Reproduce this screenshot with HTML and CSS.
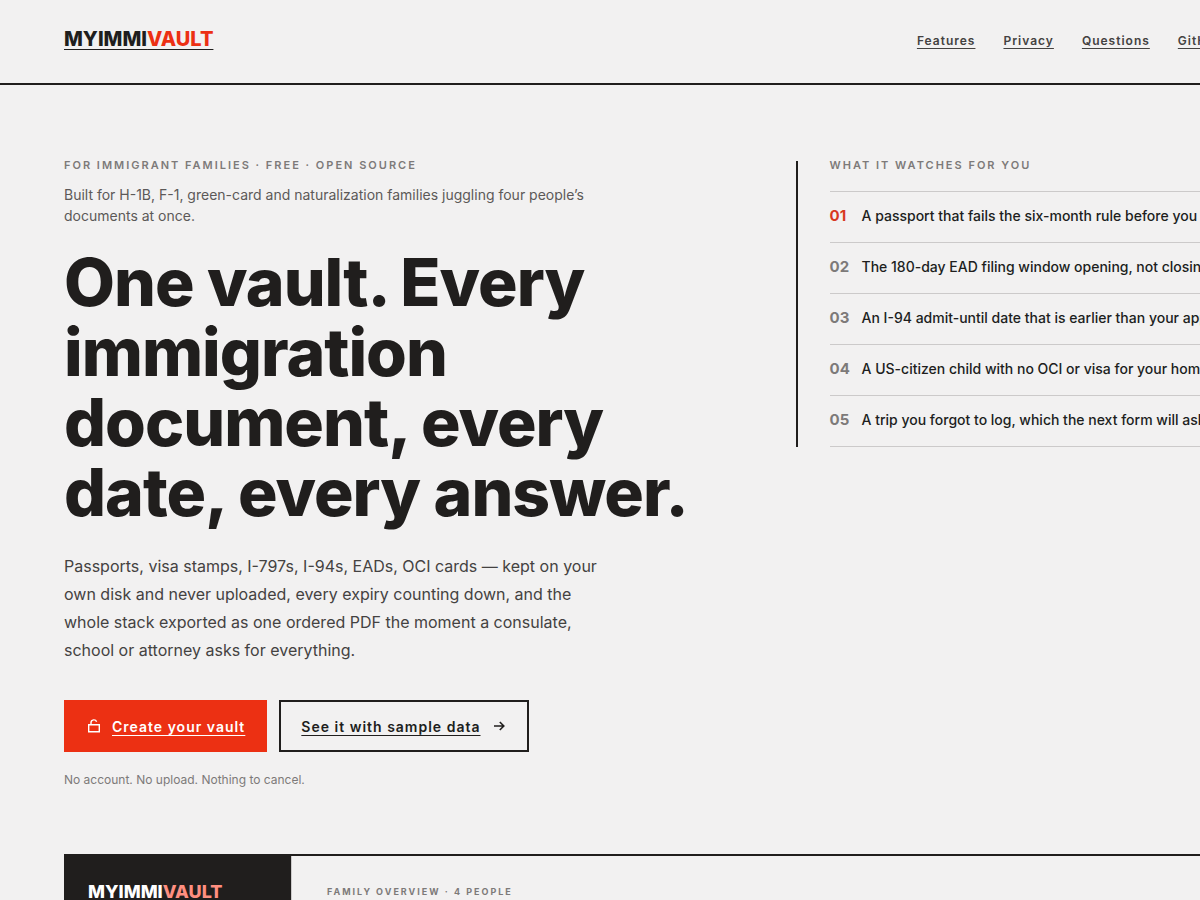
FILE: index.html
```
<!DOCTYPE html>
<html lang="en">
<head>
  <meta charset="UTF-8">
  <meta name="viewport" content="width=device-width, initial-scale=1">
  <title>MyImmiVault</title>
  <link rel="stylesheet" href="styles.css">
</head>
<body>
  <div class="page">
    <header class="site-header">
      <a class="logo" href="#">MYIMMI<span>VAULT</span></a>
      <nav class="nav">
        <a href="#features">Features</a>
        <a href="#privacy">Privacy</a>
        <a href="#questions">Questions</a>
        <a href="#github">GitHub</a>
        <a class="nav-open" href="#vault">Open vault</a>
      </nav>
    </header>

    <main>
      <section class="hero">
        <div class="hero-copy">
          <p class="eyebrow">For immigrant families · Free · Open source</p>
          <p class="built-for">Built for H-1B, F-1, green-card and naturalization families juggling four people’s documents at once.</p>
          <h1>One vault. Every immigration document, every date, every answer.</h1>
          <p class="lead">Passports, visa stamps, I-797s, I-94s, EADs, OCI cards — kept on your own disk and never uploaded, every expiry counting down, and the whole stack exported as one ordered PDF the moment a consulate, school or attorney asks for everything.</p>
          <div class="actions">
            <a class="btn btn-primary" href="#vault">
              <svg width="16" height="16" viewBox="0 0 16 16" fill="none" stroke="currentColor" stroke-width="1.4" aria-hidden="true">
                <path d="M2.7 6.7h10.6v7H2.7zM5 6.7V4.6a2.9 2.9 0 0 1 5.6-.9"/>
              </svg>
              <span>Create your vault</span>
            </a>
            <a class="btn btn-outline" href="#sample">
              <span>See it with sample data</span>
              <svg width="16" height="16" viewBox="0 0 16 16" fill="none" stroke="currentColor" stroke-width="1.6" aria-hidden="true">
                <path d="M3 8h9.6M8.8 4l4 4-4 4"/>
              </svg>
            </a>
          </div>
          <p class="note">No account. No upload. Nothing to cancel.</p>
        </div>

        <aside class="watch">
          <h2 class="eyebrow">What it watches for you</h2>
          <ol class="watch-list">
            <li><b class="urgent">01</b><span>A passport that fails the six-month rule before you travel</span></li>
            <li><b>02</b><span>The 180-day EAD filing window opening, not closing</span></li>
            <li><b>03</b><span>An I-94 admit-until date that is earlier than your approval</span></li>
            <li><b>04</b><span>A US-citizen child with no OCI or visa for your home trip</span></li>
            <li><b>05</b><span>A trip you forgot to log, which the next form will ask for</span></li>
          </ol>
        </aside>
      </section>

      <section class="preview">
        <div class="preview-side">
          <span class="preview-logo">MYIMMI<span>VAULT</span></span>
        </div>
        <div class="preview-main">
          <p class="preview-label">Family overview · 4 people</p>
        </div>
      </section>
    </main>
  </div>
</body>
</html>
```
FILE: styles.css
```
:root {
  --bg: #f2f1f1;
  --ink: #201e1d;
  --text: #444241;
  --muted: #7d7a79;
  --line: #cccaca;
  --red: #ec3013;
}

* {
  box-sizing: border-box;
}

body {
  margin: 0;
  background: var(--bg);
  color: var(--ink);
  font-family: Inter, "Liberation Sans", Arial, sans-serif;
}

h1, h2, p, ol {
  margin: 0;
}

a {
  color: inherit;
}

/* desktop layout, scrolls sideways below this width */
.page {
  min-width: 1440px;
}

.site-header {
  display: flex;
  justify-content: space-between;
  align-items: center;
  padding: 20px 64px;
  border-bottom: 2px solid var(--ink);
}

.logo {
  padding-bottom: 6px;
  font-size: 20px;
  font-weight: 800;
  line-height: 24px;
  text-decoration: underline;
  text-decoration-thickness: 1px;
  text-underline-offset: 3px;
}

.logo span {
  color: var(--red);
}

.nav {
  display: flex;
  align-items: center;
  gap: 28px;
  padding-bottom: 2px;
  font-size: 12px;
  font-weight: 600;
  letter-spacing: 1px;
  color: var(--text);
}

.nav a {
  text-decoration-thickness: 1px;
  text-underline-offset: 3px;
}

.nav .nav-open {
  min-width: 124px;
  line-height: 41px;
  text-align: center;
  background: var(--ink);
  color: #fff;
}

.hero {
  display: grid;
  grid-template-columns: 1.15fr 1fr;
  align-items: start;
  gap: 64px;
  padding: 76px 64px 66px;
}

.eyebrow {
  font-size: 11px;
  font-weight: 600;
  line-height: 8px;
  letter-spacing: 2px;
  text-transform: uppercase;
  color: var(--muted);
}

.built-for {
  max-width: 540px;
  margin-top: 15px;
  font-size: 14px;
  line-height: 21px;
  color: #5c5958;
}

h1 {
  margin-top: 21px;
  font-size: 66px;
  font-weight: 800;
  line-height: 70px;
  letter-spacing: -1px;
}

.lead {
  max-width: 540px;
  margin-top: 25px;
  font-size: 16px;
  line-height: 28px;
  color: var(--text);
}

.actions {
  display: flex;
  gap: 12px;
  margin-top: 36px;
}

.btn {
  display: flex;
  align-items: center;
  gap: 10px;
  height: 52px;
  padding: 0 20px;
  border: 2px solid var(--ink);
  font-size: 14px;
  font-weight: 600;
  letter-spacing: 1px;
  text-decoration: none;
}

.btn span {
  text-decoration: underline;
  text-decoration-thickness: 1px;
  text-underline-offset: 3px;
}

.btn-primary {
  border-color: var(--red);
  background: var(--red);
  color: #fff;
}

.note {
  margin-top: 20px;
  font-size: 12px;
  line-height: 16px;
  color: var(--muted);
}

.watch {
  padding-left: 32px;
  border-left: 2px solid var(--ink);
}

.watch-list {
  margin-top: 22px;
  padding: 0;
  list-style: none;
  border-top: 1px solid var(--line);
}

.watch-list li {
  display: flex;
  gap: 12px;
  padding: 13px 0 15px;
  border-bottom: 1px solid var(--line);
  font-size: 14px;
  font-weight: 500;
  line-height: 22px;
}

.watch-list b {
  width: 20px;
  font-size: 15px;
  font-weight: 700;
  color: var(--muted);
}

.watch-list .urgent {
  color: #d8391f;
}

.preview {
  display: flex;
  margin: 0 64px 64px;
  border: 2px solid var(--ink);
}

.preview-side {
  width: 226px;
  padding: 24px 22px 64px;
  background: var(--ink);
  border-right: 1px solid var(--line);
}

.preview-logo {
  font-size: 18px;
  font-weight: 800;
  line-height: 24px;
  color: #fff;
}

.preview-logo span {
  color: #ff8f80;
}

.preview-main {
  flex: 1;
  padding: 30px 35px;
}

.preview-label {
  font-size: 9px;
  font-weight: 700;
  line-height: 12px;
  letter-spacing: 2px;
  text-transform: uppercase;
  color: var(--muted);
}
```
